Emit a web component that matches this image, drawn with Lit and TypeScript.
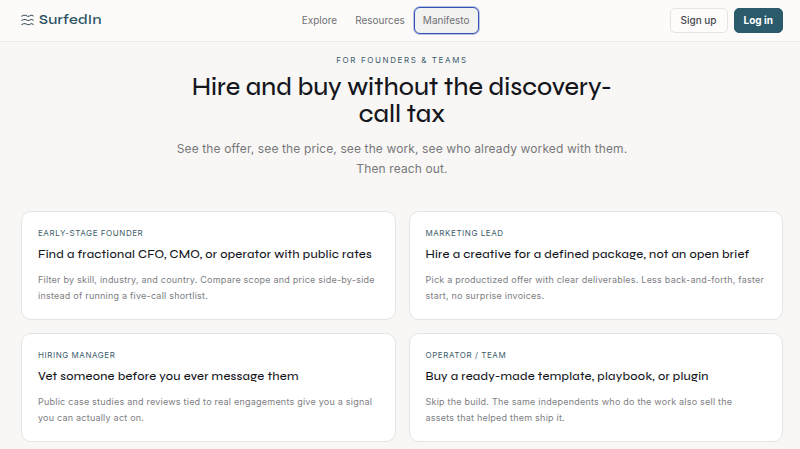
import { LitElement, html, css } from "lit";
import { customElement, property } from "lit/decorators.js";

@customElement("use-case-card")
class UseCaseCard extends LitElement {
  @property() label = "";
  @property() heading = "";
  @property() text = "";

  static styles = css`
    :host {
      display: block;
      box-sizing: border-box;
      padding: 15px 12px 15px 16px;
      border: 1px solid #e4e5e4;
      border-radius: 10px;
      background: #ffffff;
    }
    .label {
      margin: 0 0 7px;
      font-size: 8px;
      line-height: 12px;
      letter-spacing: 0.07em;
      text-transform: uppercase;
      color: #3c5c6c;
    }
    .heading {
      margin: 0 0 10px;
      font-family: Syne, "DejaVu Sans", sans-serif;
      font-size: 12px;
      line-height: 16px;
      font-weight: 500;
      letter-spacing: 0.02em;
      color: #14161c;
    }
    .text {
      margin: 0;
      font-size: 9px;
      line-height: 16px;
      letter-spacing: 0.025em;
      color: #7d7e82;
    }
  `;

  render() {
    return html`
      <p class="label">${this.label}</p>
      <h3 class="heading">${this.heading}</h3>
      <p class="text">${this.text}</p>
    `;
  }
}

const useCases = [
  {
    label: "Early-stage founder",
    heading: "Find a fractional CFO, CMO, or operator with public rates",
    text: "Filter by skill, industry, and country. Compare scope and price side-by-side instead of running a five-call shortlist.",
  },
  {
    label: "Marketing lead",
    heading: "Hire a creative for a defined package, not an open brief",
    text: "Pick a productized offer with clear deliverables. Less back-and-forth, faster start, no surprise invoices.",
  },
  {
    label: "Hiring manager",
    heading: "Vet someone before you ever message them",
    text: "Public case studies and reviews tied to real engagements give you a signal you can actually act on.",
  },
  {
    label: "Operator / team",
    heading: "Buy a ready-made template, playbook, or plugin",
    text: "Skip the build. The same independents who do the work also sell the assets\u00a0that helped them ship it.",
  },
];

@customElement("app-root")
class AppRoot extends LitElement {
  static styles = css`
    :host {
      display: block;
      min-height: 100vh;
      background: #f8f7f5;
      font-family: Inter, "Liberation Sans", sans-serif;
      color: #14161c;
    }
    .bar {
      display: flex;
      justify-content: space-between;
      align-items: center;
      box-sizing: border-box;
      height: 42px;
      padding: 0 17px 1px 21px;
      border-bottom: 1px solid #ecebea;
      background: #fcfbf9;
    }
    .brand {
      display: flex;
      align-items: center;
      gap: 5px;
      font-family: Syne, "DejaVu Sans", sans-serif;
      font-size: 14px;
      line-height: 16px;
      font-weight: 600;
      letter-spacing: 0.02em;
      color: #2c5364;
      text-decoration: none;
    }
    .waves {
      width: 13px;
      height: 12px;
      fill: none;
      stroke: #2c4450;
      stroke-width: 1;
      stroke-linecap: round;
      stroke-linejoin: round;
    }
    .links {
      display: flex;
    }
    .link {
      box-sizing: border-box;
      padding: 6px 8px;
      border: 1px solid transparent;
      border-radius: 6px;
      font-size: 10px;
      line-height: 13px;
      color: #6f7073;
      text-decoration: none;
    }
    .link.current {
      background: #f2f2f1;
      border-color: #3551b5;
      box-shadow: 0 0 0 1px #b9c3e4;
    }
    .actions {
      display: flex;
      gap: 6px;
    }
    .button {
      padding: 0 10px;
      height: 25px;
      border: 1px solid #e4e4e3;
      border-radius: 5px;
      background: #fdfcfb;
      font: 500 10px/13px Inter, "Liberation Sans", sans-serif;
      color: #45474c;
    }
    .button.primary {
      padding: 0 9px;
      border-color: #2b5a6b;
      background: #2b5a6b;
      font-weight: 700;
      color: #ffffff;
    }
    .section {
      padding: 12px 17px 7px 21px;
    }
    .intro {
      max-width: 466px;
      margin: 0 auto 32px;
      text-align: center;
    }
    .eyebrow {
      margin: 0 0 8px;
      font-size: 8px;
      line-height: 12px;
      letter-spacing: 0.2em;
      text-transform: uppercase;
      color: #3c5c6c;
    }
    .title {
      max-width: 440px;
      margin: 0 auto 11px;
      font-family: Syne, "DejaVu Sans", sans-serif;
      font-size: 25px;
      line-height: 27px;
      font-weight: 500;
    }
    .lead {
      margin: 0;
      font-size: 12px;
      line-height: 20px;
      letter-spacing: 0.01em;
      color: #77787b;
    }
    .cards {
      display: grid;
      grid-template-columns: 1fr 1fr;
      gap: 13px;
    }
  `;

  render() {
    return html`
      <header class="bar">
        <a class="brand" href="#">
          <svg class="waves" viewBox="0 0 13 12" aria-hidden="true">
            <path d="M.8 2.1 2.7 1.3 4.6 1.3 6.6 2.3 8.5 2.1 10.2 1.2 12.2 1.9" />
            <path d="M.8 6.3 2.7 5.5 4.6 5.5 6.6 6.5 8.5 6.3 10.2 5.4 12.2 6.1" />
            <path d="M.8 10.5 2.7 9.7 4.6 9.7 6.6 10.7 8.5 10.5 10.2 9.6 12.2 10.3" />
          </svg>
          SurfedIn
        </a>
        <nav class="links">
          <a class="link" href="#explore">Explore</a>
          <a class="link" href="#resources">Resources</a>
          <a class="link current" href="#manifesto">Manifesto</a>
        </nav>
        <div class="actions">
          <button class="button">Sign up</button>
          <button class="button primary">Log in</button>
        </div>
      </header>
      <main class="section">
        <div class="intro">
          <p class="eyebrow">For founders &amp; teams</p>
          <h2 class="title">Hire and buy without the discovery-call tax</h2>
          <p class="lead">
            See the offer, see the price, see the work, see who already worked with them. Then reach out.
          </p>
        </div>
        <div class="cards">
          ${useCases.map(
            (item) => html`<use-case-card
              .label=${item.label}
              .heading=${item.heading}
              .text=${item.text}
            ></use-case-card>`
          )}
        </div>
      </main>
    `;
  }
}
